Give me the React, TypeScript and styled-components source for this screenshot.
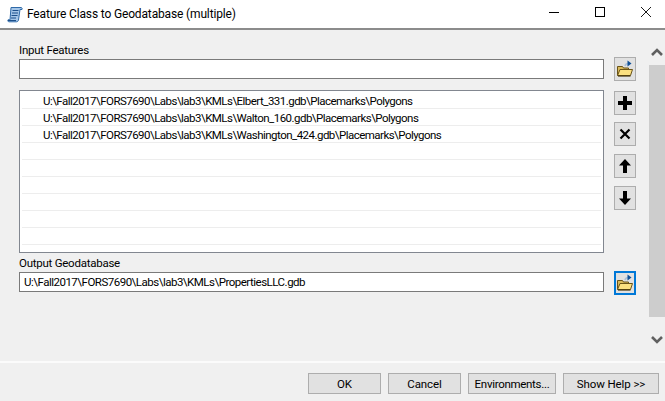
import React from "react";
import styled, { createGlobalStyle } from "styled-components";

const Global = createGlobalStyle`
  html, body { margin: 0; padding: 0; background: #f0f0f0; overflow: hidden; }
  * { box-sizing: border-box; }
`;

const Window = styled.div`
  width: 665px;
  height: 401px;
  display: flex;
  flex-direction: column;
  background: #f0f0f0;
  font-family: Roboto, "Open Sans", sans-serif;
  font-size: 11.5px;
  color: #000;
  overflow: hidden;
`;

const TitleBar = styled.div`
  height: 30px;
  flex: none;
  background: #fff;
  border-bottom: 2px solid #8c8c8c;
  display: flex;
  align-items: center;
  padding-left: 7px;
`;

const TitleText = styled.span`
  margin-left: 3px;
  font-size: 12px;
  letter-spacing: -0.15px;
  flex: 1;
  white-space: nowrap;
`;

const WinButtons = styled.div`
  display: flex;
  align-items: center;
  margin-top: -4px;
  margin-right: -4px;
`;

const WinButton = styled.div`
  width: 46px;
  height: 26px;
  display: flex;
  align-items: center;
  justify-content: center;
`;

const Main = styled.div`
  flex: 1;
  display: flex;
  min-height: 0;
`;

const Fields = styled.div`
  width: 604px;
  flex: none;
  padding: 12px 0 0 19px;
  display: flex;
  flex-direction: column;
`;

const Label = styled.div<{ $top?: number }>`
  height: 16px;
  line-height: 16px;
  margin-top: ${(p) => p.$top ?? 0}px;
  letter-spacing: -0.25px;
  white-space: nowrap;
`;

const Input = styled.div<{ $top?: number }>`
  height: 20px;
  flex: none;
  margin-top: ${(p) => p.$top ?? 0}px;
  background: #fff;
  border: 1px solid #7a7a7a;
  line-height: 18px;
  padding-left: 4px;
  letter-spacing: -0.5px;
  white-space: nowrap;
`;

const List = styled.div`
  height: 163px;
  flex: none;
  margin-top: 11px;
  background: #fff;
  border: 1px solid #828790;
  padding: 1px 2px 0 2px;
`;

const Row = styled.div`
  height: 17px;
  line-height: 17px;
  padding-top: 1px;
  border-bottom: 1px solid #ededed;
  padding-left: 21px;
  letter-spacing: -0.53px;
  white-space: nowrap;
`;

const Tools = styled.div`
  width: 22px;
  margin-left: 10px;
  flex: none;
  padding-top: 27px;
  display: flex;
  flex-direction: column;
`;

const Tool = styled.div<{ $top?: number; $focus?: boolean }>`
  width: 22px;
  height: 24px;
  flex: none;
  margin-top: ${(p) => p.$top ?? 0}px;
  background: #e1e1e1;
  border: ${(p) => (p.$focus ? "2px solid #0078d7" : "1px solid #adadad")};
  display: flex;
  align-items: center;
  justify-content: center;
`;

const ScrollBar = styled.div`
  width: 16px;
  margin-left: 13px;
  flex: none;
  display: flex;
  flex-direction: column;
  align-items: center;
  padding-top: 17px;
`;

const Thumb = styled.div`
  width: 16px;
  height: 252px;
  flex: none;
  margin-top: 9px;
  margin-bottom: 19px;
  background: #cdcdcd;
`;

const Footer = styled.div`
  height: 40px;
  flex: none;
  border-top: 2px solid #fbfbfb;
  display: flex;
  gap: 7px;
  justify-content: flex-end;
  padding: 10px 6px 0 0;
`;

const Btn = styled.div<{ $w: number; $tight?: boolean }>`
  width: ${(p) => p.$w}px;
  height: 21px;
  background: #e1e1e1;
  border: 1px solid #adadad;
  display: flex;
  align-items: center;
  justify-content: center;
  letter-spacing: ${(p) => (p.$tight ? "-0.3px" : "-0.1px")};
  white-space: nowrap;
`;

const Folder = () => (
  <svg width="18" height="18" viewBox="0 0 18 18">
    <path d="M1.5 15.5V6.5h5l1 1.5h5v2" fill="#d9b95a" stroke="#6a5418" />
    <path d="M1.5 15.5 4 9.5h12.5l-2 6z" fill="#fbe080" stroke="#6a5418" />
    <path d="M2 16h12.5" stroke="#43330c" strokeWidth="1.2" />
    <path d="M9 6c.5-2 2-2.5 3.5-2.5" fill="none" stroke="#a9c0d8" strokeWidth="1.6" />
    <path d="M11.5 .5 15.5 3.5 11.5 6.5z" fill="#0f4f96" />
  </svg>
);

const ScrollIcon = () => (
  <svg width="17" height="17" viewBox="0 0 17 17">
    <path d="M4 1.5h10c1 0 1.5 1 1 2h-2L11.5 14c-.3 1.3-1 1.8-2 1.8H2c-1 0-1.5-1-1-2h2z" fill="#a5c6e8" stroke="#2f6aa8" />
    <path d="M5.5 4.5h6M5 7h6M4.5 9.5h6M4 12h5" stroke="#1c4f8a" />
    <path d="M1 14.5h8" stroke="#1c4f8a" />
  </svg>
);

const Plus = () => (
  <svg width="14" height="14" viewBox="0 0 14 14"><path d="M5 0h4v5h5v4H9v5H5V9H0V5h5z" fill="#000" /></svg>
);
const Cross = () => (
  <svg width="12" height="12" viewBox="0 0 12 12"><path d="M1.5 1.5l9 9M10.5 1.5l-9 9" stroke="#000" strokeWidth="2.2" /></svg>
);
const Up = () => (
  <svg width="12" height="14" viewBox="0 0 12 14"><path d="M6 0l6 6.5H8V14H4V6.5H0z" fill="#000" /></svg>
);
const Down = () => (
  <svg width="12" height="14" viewBox="0 0 12 14"><path d="M6 14 0 7.5h4V0h4v7.5h4z" fill="#000" /></svg>
);
const Chevron = ({ up }: { up?: boolean }) => (
  <svg width="12" height="9" viewBox="0 0 12 9" style={{ flex: "none" }}>
    <path d={up ? "M1 8 6 3l5 5" : "M1 1l5 5 5-5"} fill="none" stroke="#606060" strokeWidth="2.6" />
  </svg>
);

const paths = [
  "U:\\Fall2017\\FORS7690\\Labs\\lab3\\KMLs\\Elbert_331.gdb\\Placemarks\\Polygons",
  "U:\\Fall2017\\FORS7690\\Labs\\lab3\\KMLs\\Walton_160.gdb\\Placemarks\\Polygons",
  "U:\\Fall2017\\FORS7690\\Labs\\lab3\\KMLs\\Washington_424.gdb\\Placemarks\\Polygons",
  "", "", "", "", "", "",
];

export default function App() {
  return (
    <Window>
      <Global />
      <TitleBar>
        <ScrollIcon />
        <TitleText>Feature Class to Geodatabase (multiple)</TitleText>
        <WinButtons>
          <WinButton>
            <svg width="10" height="10" viewBox="0 0 10 10"><path d="M0 5.5h10" stroke="#000" /></svg>
          </WinButton>
          <WinButton>
            <svg width="10" height="10" viewBox="0 0 10 10"><rect x=".5" y=".5" width="9" height="9" fill="none" stroke="#000" /></svg>
          </WinButton>
          <WinButton>
            <svg width="10" height="10" viewBox="0 0 10 10"><path d="M0 0l10 10M10 0 0 10" stroke="#000" strokeWidth=".9" /></svg>
          </WinButton>
        </WinButtons>
      </TitleBar>
      <Main>
        <Fields>
          <Label>Input Features</Label>
          <Input $top={1} />
          <List>
            {paths.map((p, i) => (
              <Row key={i}>{p}</Row>
            ))}
          </List>
          <Label $top={2}>Output Geodatabase</Label>
          <Input $top={1}>U:\Fall2017\FORS7690\Labs\lab3\KMLs\PropertiesLLC.gdb</Input>
        </Fields>
        <Tools>
          <Tool><Folder /></Tool>
          <Tool $top={10}><Plus /></Tool>
          <Tool $top={7}><Cross /></Tool>
          <Tool $top={8}><Up /></Tool>
          <Tool $top={8}><Down /></Tool>
          <Tool $top={61} $focus><Folder /></Tool>
        </Tools>
        <ScrollBar>
          <Chevron up />
          <Thumb />
          <Chevron />
        </ScrollBar>
      </Main>
      <Footer>
        <Btn $w={73}>OK</Btn>
        <Btn $w={73}>Cancel</Btn>
        <Btn $w={88} $tight>Environments...</Btn>
        <Btn $w={96}>Show Help &gt;&gt;</Btn>
      </Footer>
    </Window>
  );
}
